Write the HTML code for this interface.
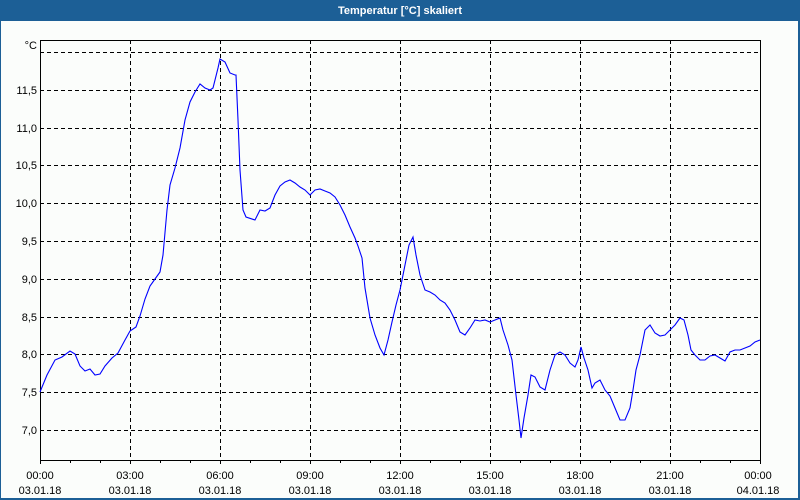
<!DOCTYPE html>
<html><head><style>
html,body{margin:0;width:800px;height:500px;background:#fbfdfb;overflow:hidden;font-family:Tahoma,"Liberation Sans","DejaVu Sans",sans-serif;}
svg{display:block}
svg text{font-family:"Liberation Sans",sans-serif;font-size:11px;fill:#000}
</style></head><body>
<svg width="800" height="500" xmlns="http://www.w3.org/2000/svg">
<rect x="0" y="0" width="800" height="500" fill="#fbfdfb"/>
<rect x="0" y="0" width="800" height="21" fill="#1c5f96"/>
<rect x="0" y="0" width="1" height="500" fill="#1c5f96"/>
<rect x="798" y="0" width="2" height="500" fill="#1c5f96"/>
<rect x="0" y="498" width="800" height="2" fill="#1c5f96"/>
<text x="400" y="14" text-anchor="middle" style="fill:#fff;font-weight:bold;font-size:11px">Temperatur [°C] skaliert</text>
<g stroke="#000" stroke-width="1" stroke-dasharray="4,3" shape-rendering="crispEdges">
<line x1="40" y1="52.5" x2="760" y2="52.5"/>
<line x1="40" y1="90.5" x2="760" y2="90.5"/>
<line x1="40" y1="128.5" x2="760" y2="128.5"/>
<line x1="40" y1="165.5" x2="760" y2="165.5"/>
<line x1="40" y1="203.5" x2="760" y2="203.5"/>
<line x1="40" y1="241.5" x2="760" y2="241.5"/>
<line x1="40" y1="279.5" x2="760" y2="279.5"/>
<line x1="40" y1="317.5" x2="760" y2="317.5"/>
<line x1="40" y1="354.5" x2="760" y2="354.5"/>
<line x1="40" y1="392.5" x2="760" y2="392.5"/>
<line x1="40" y1="430.5" x2="760" y2="430.5"/>
<line x1="130.5" y1="40" x2="130.5" y2="460"/>
<line x1="220.5" y1="40" x2="220.5" y2="460"/>
<line x1="310.5" y1="40" x2="310.5" y2="460"/>
<line x1="400.5" y1="40" x2="400.5" y2="460"/>
<line x1="490.5" y1="40" x2="490.5" y2="460"/>
<line x1="580.5" y1="40" x2="580.5" y2="460"/>
<line x1="670.5" y1="40" x2="670.5" y2="460"/>
</g>
<rect x="40.5" y="40.5" width="720" height="420" fill="none" stroke="#000" stroke-width="1" shape-rendering="crispEdges"/>
<g stroke="#000" stroke-width="1" shape-rendering="crispEdges">
<path d="M40.5 460v4M70.5 460v3M100.5 460v3M130.5 460v4M160.5 460v3M190.5 460v3M220.5 460v4M250.5 460v3M280.5 460v3M310.5 460v4M340.5 460v3M370.5 460v3M400.5 460v4M430.5 460v3M460.5 460v3M490.5 460v4M520.5 460v3M550.5 460v3M580.5 460v4M610.5 460v3M640.5 460v3M670.5 460v4M700.5 460v3M730.5 460v3M760.5 460v4"/>
</g>
<g text-anchor="end">
<text x="37" y="49">°C</text>
<text x="37" y="94">11,5</text>
<text x="37" y="132">11,0</text>
<text x="37" y="169">10,5</text>
<text x="37" y="207">10,0</text>
<text x="37" y="245">9,5</text>
<text x="37" y="283">9,0</text>
<text x="37" y="321">8,5</text>
<text x="37" y="358">8,0</text>
<text x="37" y="396">7,5</text>
<text x="37" y="434">7,0</text>
</g>
<g text-anchor="middle">
<text x="40" y="479">00:00</text><text x="40" y="494">03.01.18</text>
<text x="130" y="479">03:00</text><text x="130" y="494">03.01.18</text>
<text x="220" y="479">06:00</text><text x="220" y="494">03.01.18</text>
<text x="310" y="479">09:00</text><text x="310" y="494">03.01.18</text>
<text x="400" y="479">12:00</text><text x="400" y="494">03.01.18</text>
<text x="490" y="479">15:00</text><text x="490" y="494">03.01.18</text>
<text x="580" y="479">18:00</text><text x="580" y="494">03.01.18</text>
<text x="670" y="479">21:00</text><text x="670" y="494">03.01.18</text>
<text x="758" y="479">00:00</text><text x="758" y="494">04.01.18</text>
</g>
<polyline fill="none" stroke="#0000ff" stroke-width="1.1" points="40,392 47,375 55,360 62,357 70,351 75,354 80,366 85,371 90,369 95,375 100,374 105,366 112,358 118,353 125,340 130,331 136,327 140,316 145,299 150,286 155,279 160,272 163,255 167,210 170,185 175,168 180,148 185,120 190,102 195,92 200,84 205,88 210,90 213,88 218,68 220,59 225,62 230,73 235,75 236,75 238,120 240,170 243,210 246,217 255,220 260,210 265,211 270,208 275,195 280,186 285,182 290,180 295,183 300,187 305,190 310,195 315,190 320,189 325,191 330,193 335,197 340,205 345,215 350,227 355,238 358,246 362,258 365,288 370,318 375,335 380,348 384,355 388,340 392,322 396,305 400,290 405,265 409,245 413,237 416,255 420,275 425,290 430,292 435,295 440,300 445,303 450,310 455,320 460,332 465,335 470,328 475,320 480,321 485,320 490,322 495,320 500,318 503,330 508,345 512,360 516,395 519,420 521,438 524,418 528,395 531,375 535,377 540,387 545,390 550,370 555,355 560,352 565,355 570,363 575,367 578,360 581,347 584,358 588,370 592,388 595,383 600,380 605,390 610,396 615,408 620,420 625,420 630,408 633,390 636,370 640,355 645,330 650,325 655,333 660,336 665,335 670,330 675,325 680,318 684,320 688,335 691,350 695,355 700,360 705,360 710,356 715,355 720,358 725,361 730,352 735,350 740,350 745,348 750,346 755,342 760,340"/>
</svg>
</body></html>
